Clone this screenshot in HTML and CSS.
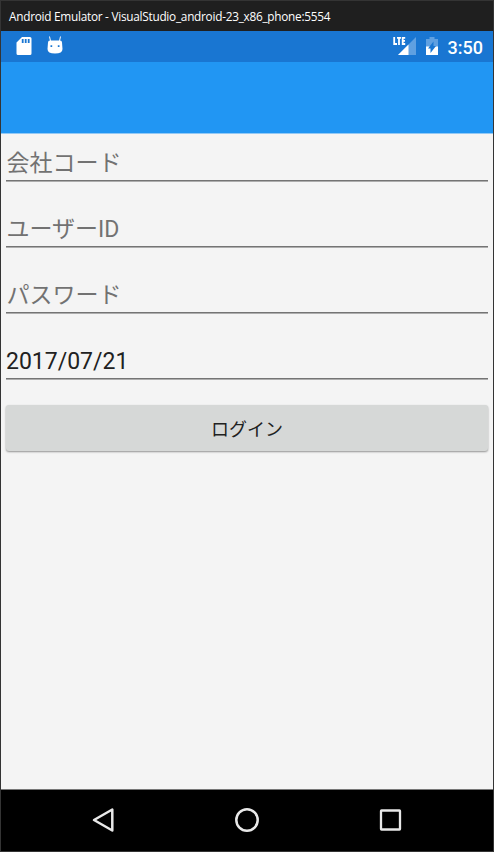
FILE: index.html
```html
<!DOCTYPE html>
<html lang="ja">
<head>
<meta charset="utf-8">
<title>Android Emulator</title>
<link rel="stylesheet" href="styles.css">
</head>
<body>
<div class="window">
  <header class="titlebar"><span class="title">Android Emulator - VisualStudio_android-23_x86_phone:5554</span></header>
  <div class="statusbar">
    <svg class="sd" width="16" height="20" viewBox="0 0 16 20"><path fill="#fff" fill-rule="evenodd" d="M6 1H14Q15.500 1 15.500 2.500V17.500Q15.500 19 14 19H2Q.5 19 .5 17.500V6.500ZM5.800 3V7H7.600V3ZM8.800 3V7H10.600V3ZM11.800 3V7H13.600V3Z"/></svg>
    <svg class="droid" width="16" height="20" viewBox="0 0 16 20"><path stroke="#fff" stroke-width="1" d="M2.500 .5L3.500 5M13.500 .5L12.500 5"/><path fill="#fff" fill-rule="evenodd" d="M1 6.500Q1 4.500 3 4.500H13Q15 4.500 15 6.500L15.500 13Q15.500 17.500 8 17.500Q.5 17.500 .5 13ZM3.500 9.300V11H5.200V9.300ZM10.800 9.300V11H12.500V9.300Z"/></svg>
    <svg class="signal" width="24" height="20" viewBox="0 0 24 20"><path fill="#5fa0e1" d="M23 1V19H5Z"/><path fill="#fff" d="M15.500 8.500V19H5Z"/><path fill="#1976d2" d="M0 0H13.500V9H0Z"/><path fill="none" stroke="#fff" stroke-width="1.800" d="M1.200 1V8H4M4 1.800H8M6 1.800V8.900M12.200 1.800H9.700V8H12.200M9.700 4.900H12"/></svg>
    <svg class="battery" width="14" height="20" viewBox="0 0 14 20"><path fill="#5fa0e1" d="M4.500 1H9.500V3H13V11H1V3H4.500Z"/><path fill="#fff" d="M1 10.500H13V19H1Z"/><path fill="#1976d2" d="M8.500 5.500V10H11L5.500 17V12.500H3Z"/></svg>
    <span class="clock">3:50</span>
  </div>
  <div class="appbar"></div>
  <main class="form">
    <div class="field">会社コード</div>
    <div class="field">ユーザーID</div>
    <div class="field">パスワード</div>
    <div class="field date">2017/07/21</div>
    <button class="login">ログイン</button>
  </main>
  <nav class="navbar">
    <svg width="26" height="28" viewBox="0 0 26 28"><path fill="none" stroke="#e8e8e8" stroke-width="2.500" stroke-linejoin="round" d="M21.300 3.500V24.500L3 14Z"/></svg>
    <svg width="26" height="28" viewBox="0 0 26 28"><circle cx="13" cy="14" r="10.700" fill="none" stroke="#e8e8e8" stroke-width="2.500"/></svg>
    <svg width="26" height="28" viewBox="0 0 26 28"><rect x="4" y="4.500" width="19" height="19" rx=".5" fill="none" stroke="#e8e8e8" stroke-width="2.300"/></svg>
  </nav>
</div>
</body>
</html>
```

FILE: styles.css
```css
* { box-sizing: border-box; }
body { margin: 0; }
.window {
  width: 494px;
  height: 852px;
  display: flex;
  flex-direction: column;
  background: #f4f4f4;
  border: 1px solid #343434;
  font-family: Roboto, "Noto Sans CJK JP", sans-serif;
}
.titlebar {
  height: 30px;
  padding-left: 8px;
  background: #1f1f1f;
  color: #fff;
  font: 11.8px/30px "Open Sans", sans-serif;
  letter-spacing: -0.26px;
  white-space: nowrap;
}
.statusbar {
  height: 31px;
  display: flex;
  align-items: center;
  background: #1976d2;
  padding: 0 10px 1px 15px;
}
.droid { margin-left: 15px; }
.signal { margin-left: auto; }
.battery { margin-left: 8px; margin-right: 1px; }
.clock {
  margin-left: 8px;
  color: #fff;
  font-size: 18px;
  font-weight: 500;
  line-height: 30px;
  padding-top: 3px;
}
.appbar { height: 72px; background: #2196f3; border-bottom: 1px solid #93c9f5; }
.form { flex: 1; padding: 0 5px; }
.field {
  height: 47px;
  margin-bottom: 19px;
  border-bottom: 1px solid #747474;
  box-shadow: 0 1px 0 #adadad;
  color: #727272;
  font-size: 23px;
  line-height: 60px;
  text-indent: 0.5px;
}
.date { color: #212121; text-indent: 0; }
.login {
  display: block;
  width: 482px;
  height: 46px;
  margin-top: 26px;
  padding: 0;
  border: 0;
  border-radius: 3px;
  background: #d6d8d7;
  box-shadow: 0 1px 2px rgba(0, 0, 0, .4);
  color: #212121;
  font: 400 18px/46px Roboto, "Noto Sans CJK JP", sans-serif;
  padding-top: 2px;
}
.navbar {
  height: 62px;
  display: flex;
  justify-content: center;
  align-items: center;
  gap: 117px;
  padding-bottom: 2px;
  background: #000;
  border-top: 1px solid #777;
}
```
